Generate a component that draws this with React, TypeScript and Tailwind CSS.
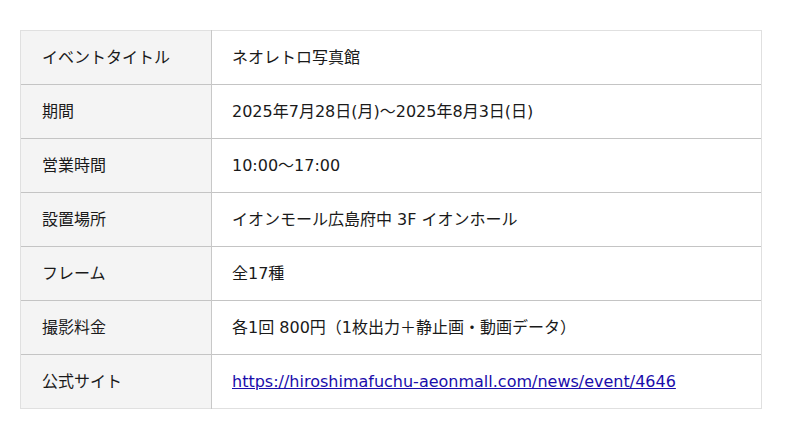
import React from 'react';

const rows: { label: string; value: React.ReactNode }[] = [
  { label: 'イベントタイトル', value: 'ネオレトロ写真館' },
  { label: '期間', value: '2025年7月28日(月)〜2025年8月3日(日)' },
  { label: '営業時間', value: '10:00〜17:00' },
  { label: '設置場所', value: 'イオンモール広島府中 3F イオンホール' },
  { label: 'フレーム', value: '全17種' },
  { label: '撮影料金', value: '各1回 800円（1枚出力＋静止画・動画データ）' },
  {
    label: '公式サイト',
    value: (
      <a href="#" className="text-[#1a0dab] underline">
        https://hiroshimafuchu-aeonmall.com/news/event/4646
      </a>
    ),
  },
];

export default function App() {
  return (
    <div
      className="w-[800px] h-[439px] bg-white pt-[30px] pl-[20px]"
      style={{ fontFamily: '"DejaVu Sans", "Noto Sans CJK JP", sans-serif' }}
    >
      <table className="w-[742px] border-collapse text-base text-[#1a1a1a]">
        <tbody>
          {rows.map((r, i) => (
            <tr
              key={r.label}
              className={`h-[54px] ${i === 0 ? 'border-t border-[#e0e0e0]' : 'border-t border-[#c4c4c4]'} ${
                i === rows.length - 1 ? 'border-b border-b-[#e0e0e0]' : ''
              }`}
            >
              <th className="w-[191px] bg-[#f4f4f4] border-l border-[#e0e0e0] border-r border-r-[#c8c8c8] pl-[21px] text-left font-normal align-middle">
                {r.label}
              </th>
              <td className="pl-[20px] border-r border-[#e0e0e0] align-middle">{r.value}</td>
            </tr>
          ))}
        </tbody>
      </table>
    </div>
  );
}
